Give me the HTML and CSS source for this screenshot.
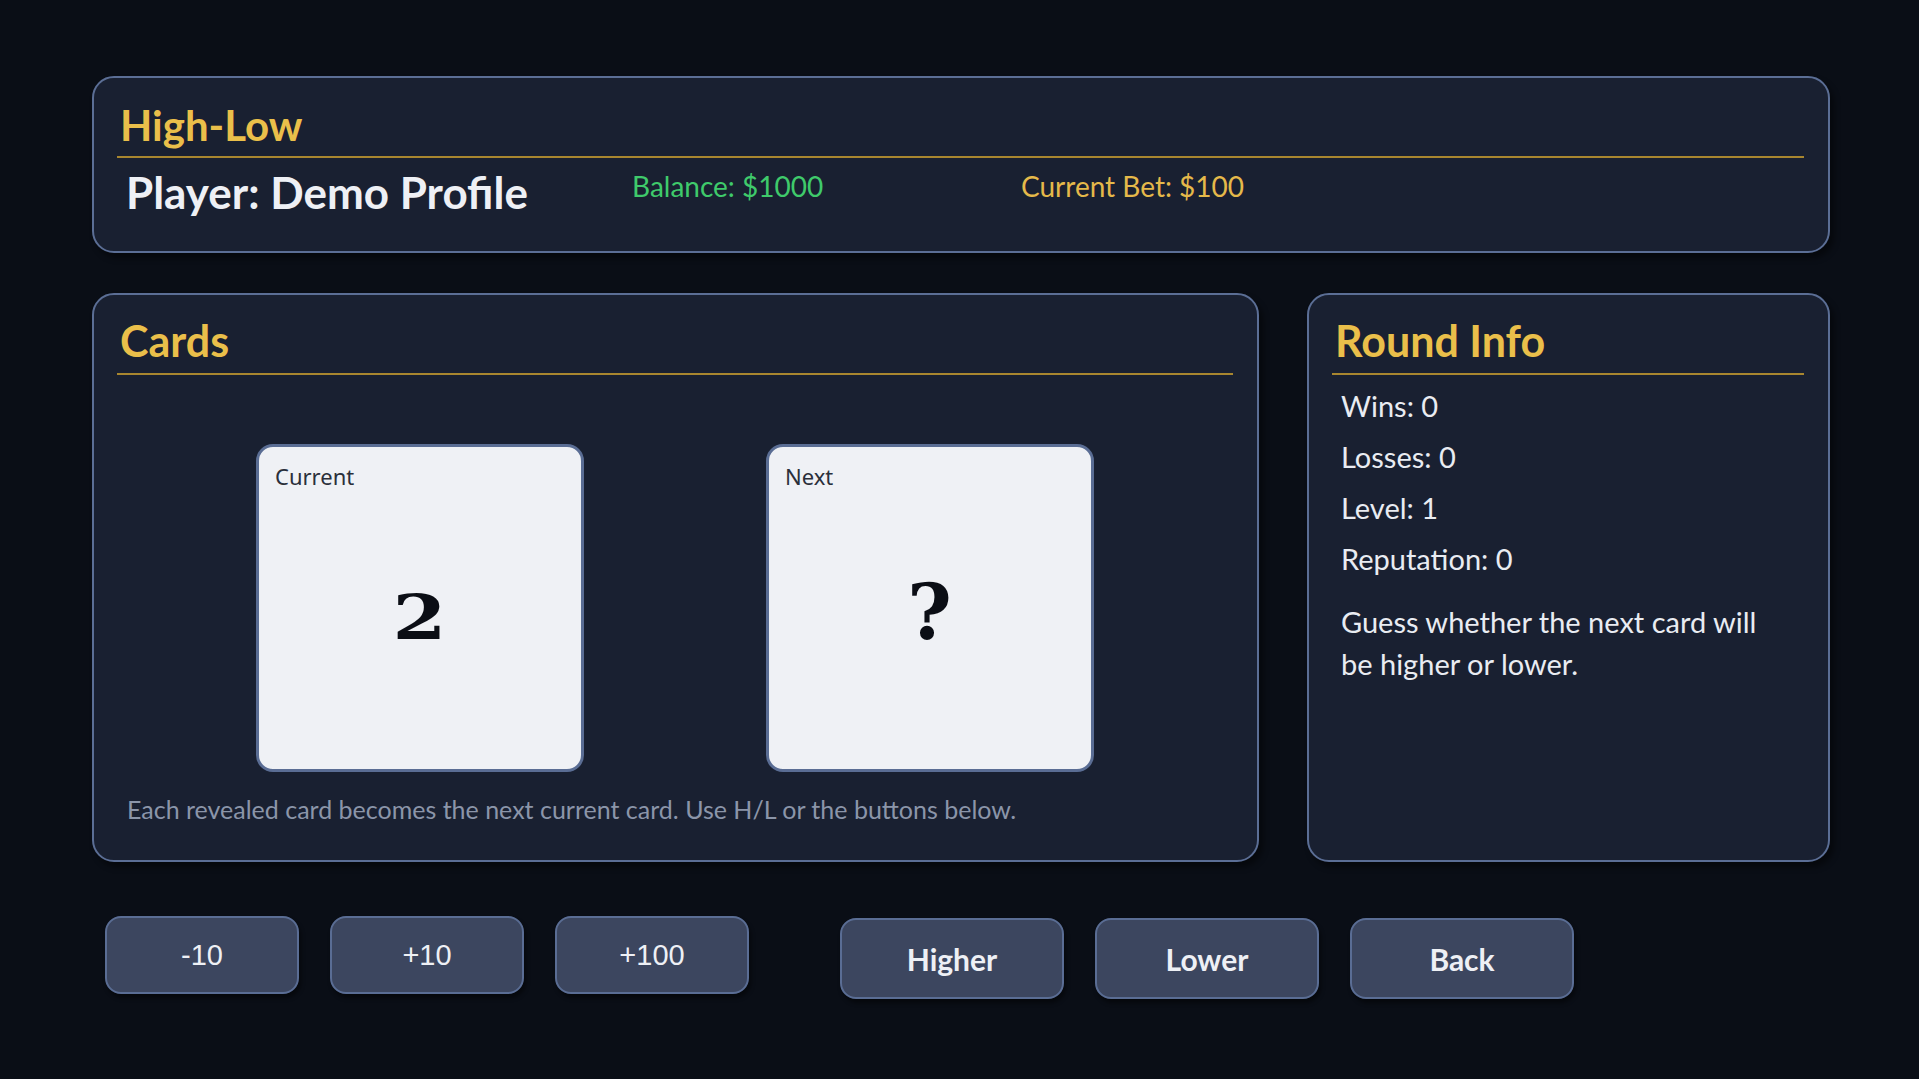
FILE: index.html
```html
<!DOCTYPE html>
<html lang="en">
<head>
<meta charset="UTF-8">
<title>High-Low</title>
<link rel="stylesheet" href="styles.css">
</head>
<body>
<div class="screen">
    <section class="panel panel-head">
        <h1 class="panel-title title-sm">High-Low</h1>
        <div class="head-row">
            <div class="player">Player: Demo Profile</div>
            <div class="stat balance">Balance: $1000</div>
            <div class="stat bet">Current Bet: $100</div>
        </div>
    </section>

    <div class="board">
        <section class="panel panel-cards">
            <h2 class="panel-title">Cards</h2>
            <div class="card-row">
                <div class="card">
                    <div class="card-label">Current</div>
                    <div class="card-value">2</div>
                </div>
                <div class="card">
                    <div class="card-label">Next</div>
                    <div class="card-value card-hidden">?</div>
                </div>
            </div>
            <p class="hint">Each revealed card becomes the next current card. Use H/L or the buttons below.</p>
        </section>

        <section class="panel panel-info">
            <h2 class="panel-title">Round Info</h2>
            <ul class="info-list">
                <li>Wins: 0</li>
                <li>Losses: 0</li>
                <li>Level: 1</li>
                <li>Reputation: 0</li>
            </ul>
            <p class="info-text">Guess whether the next card will be higher or lower.</p>
        </section>
    </div>

    <div class="controls">
        <button class="btn btn-bet">-10</button>
        <button class="btn btn-bet">+10</button>
        <button class="btn btn-bet">+100</button>
        <button class="btn btn-act btn-first">Higher</button>
        <button class="btn btn-act">Lower</button>
        <button class="btn btn-act">Back</button>
    </div>
</div>
</body>
</html>
```

FILE: styles.css
```css
html,body{margin:0;padding:0;}
body{
    background:#0a0e16;
    font-family:Lato,"Liberation Sans",sans-serif;
    color:#e9ecf2;
    width:1919px;
    height:1079px;
    overflow:hidden;
}
h1,h2,p,ul,li{margin:0;padding:0;list-style:none;}

.screen{
    width:1738px;
    padding:76px 0 0 92px;
}

/* panels */
.panel{
    box-sizing:border-box;
    background:#192031;
    border:2px solid #5b6e95;
    border-radius:22px;
    padding:0 24px 0 23px;
    box-shadow:4px 5px 6px rgba(0,0,0,.45);
}
.panel-title{
    font-size:43px;
    line-height:52px;
    font-weight:700;
    color:#eabf4a;
    padding:20px 0 6px 3px;
    border-bottom:2px solid #a8862f;
}
.panel-title.title-sm{
    font-size:42px;
    line-height:48px;
    padding:23px 0 7px 3px;
}

/* header */
.panel-head{
    height:177px;
}
.head-row{
    display:flex;
    align-items:flex-start;
    margin-top:9px;
    padding-left:9px;
}
.player{
    width:506px;
    font-size:44px;
    line-height:50px;
    font-weight:700;
    color:#eef0f5;
}
.stat{
    font-size:28px;
    line-height:34px;
    padding-top:2px;
}
.balance{
    width:389px;
    color:#3fca6b;
}
.bet{
    color:#e5b94a;
}

/* board */
.board{
    display:grid;
    grid-template-columns:1167px 523px;
    gap:48px;
    margin-top:40px;
}
.panel-cards,.panel-info{
    height:569px;
}
.card-row{
    display:flex;
    justify-content:center;
    gap:182px;
    margin-top:69px;
}
.card{
    box-sizing:border-box;
    width:328px;
    height:328px;
    background:#eff1f5;
    border:3px solid #5a6d94;
    border-radius:17px;
    padding:16px 17px 23px 16px;
    display:flex;
    flex-direction:column;
}
.card-label{
    font-family:"Noto Sans","Open Sans",sans-serif;
    font-size:22px;
    line-height:26px;
    color:#2a2f3a;
}
.card-value{
    flex:1;
    display:flex;
    align-items:center;
    justify-content:center;
    font-family:"DejaVu Serif",serif;
    font-weight:700;
    font-size:62px;
    line-height:62px;
    color:#0b0e15;
    transform:scaleX(1.25);
}
.card-value.card-hidden{
    font-size:76px;
    line-height:76px;
    padding-bottom:10px;
    transform:none;
}
.hint{
    margin-top:22px;
    padding-left:10px;
    font-size:25px;
    line-height:30px;
    color:#8b95a9;
}

/* round info */
.info-list{
    margin-top:5px;
    padding-left:9px;
}
.info-list li{
    font-size:29px;
    line-height:51px;
}
.info-text{
    max-width:430px;
    margin-top:17px;
    padding-left:9px;
    font-size:29px;
    line-height:42px;
}

/* buttons */
.controls{
    display:flex;
    align-items:flex-start;
    gap:31px;
    margin:54px 0 0 13px;
}
.btn{
    box-sizing:border-box;
    background:#3c465f;
    border:2px solid #5a6d94;
    border-radius:16px;
    color:#eef0f5;
    box-shadow:2px 4px 4px rgba(0,0,0,.45);
    padding:0;
    cursor:pointer;
}
.btn-bet{
    width:194px;
    height:78px;
    font-family:"Liberation Sans",Arial,sans-serif;
    font-size:29px;
}
.btn-act{
    width:224px;
    height:81px;
    margin-top:2px;
    font-family:Lato,sans-serif;
    font-weight:700;
    font-size:30px;
}
.btn-first{
    margin-left:60px;
}
```
